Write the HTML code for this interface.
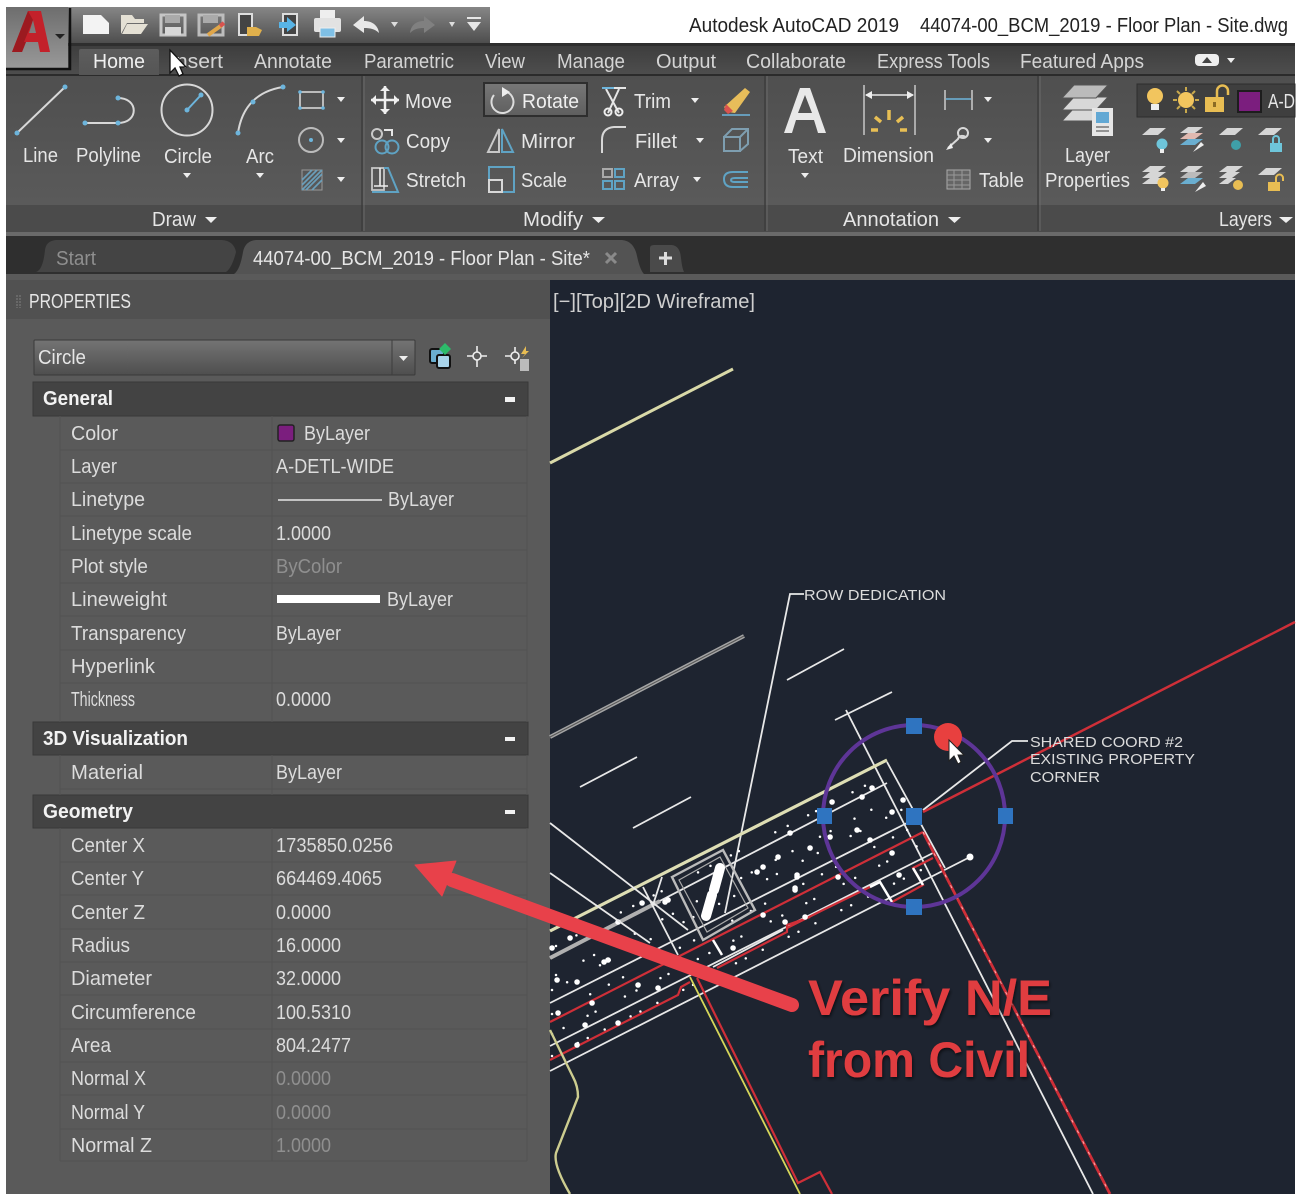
<!DOCTYPE html>
<html><head><meta charset="utf-8"><style>
html,body{margin:0;padding:0;background:#fff;width:1307px;height:1194px;overflow:hidden}
svg{display:block;font-family:"Liberation Sans",sans-serif;filter:blur(0.35px)}
.t{fill:#e6e6e6;font-size:20px}
.r{fill:#dcdcdc;font-size:20px}
.g{fill:#8f8f8f;font-size:20px}
.h{fill:#f2f2f2;font-size:20px;font-weight:bold}
.ar{fill:#eee}
.ico{fill:none;stroke:#d8d8d8;stroke-width:2}
.blu{fill:none;stroke:#5fa3c4;stroke-width:2}
.w{fill:none;stroke:#e8e8e8;stroke-width:1.8}
.rd{fill:none;stroke:#cf2f38;stroke-width:2.2}
</style></head><body>
<svg width="1307" height="1194" viewBox="0 0 1307 1194" xmlns="http://www.w3.org/2000/svg">
<defs>
<linearGradient id="qat" x1="0" y1="0" x2="0" y2="1"><stop offset="0" stop-color="#868686"/><stop offset="1" stop-color="#4c4c4c"/></linearGradient>
<linearGradient id="logo" x1="0" y1="0" x2="0" y2="1"><stop offset="0" stop-color="#6e6e6e"/><stop offset="1" stop-color="#9a9a9a"/></linearGradient>
<linearGradient id="tab" x1="0" y1="0" x2="0" y2="1"><stop offset="0" stop-color="#3e3e3e"/><stop offset="1" stop-color="#4e4e4e"/></linearGradient>
<linearGradient id="rib" x1="0" y1="0" x2="0" y2="1"><stop offset="0" stop-color="#4f4f4f"/><stop offset="1" stop-color="#5a5a5a"/></linearGradient>
<linearGradient id="cb" x1="0" y1="0" x2="0" y2="1"><stop offset="0" stop-color="#747474"/><stop offset="1" stop-color="#4e4e4e"/></linearGradient>
<linearGradient id="act" x1="0" y1="0" x2="0" y2="1"><stop offset="0" stop-color="#5d5d5d"/><stop offset="1" stop-color="#555"/></linearGradient>
<linearGradient id="btn" x1="0" y1="0" x2="0" y2="1"><stop offset="0" stop-color="#777"/><stop offset="1" stop-color="#5e5e5e"/></linearGradient>
<filter id="sh" x="-5%" y="-5%" width="110%" height="115%"><feDropShadow dx="1" dy="2" stdDeviation="1.500" flood-color="#000" flood-opacity="0.6"/></filter>
</defs>

<!-- QAT + app frame -->
<rect x="58" y="7" width="432" height="37" fill="url(#qat)"/>
<rect x="6" y="44" width="1289" height="1150" fill="#4a4a4a"/>
<rect x="58" y="43" width="1237" height="3" fill="#2e2e2e"/>
<rect x="6" y="46" width="1289" height="29" fill="url(#tab)"/>
<rect x="6" y="7" width="62" height="63" fill="url(#logo)"/>
<path d="M6 69H70V8" fill="none" stroke="#111" stroke-width="2.5"/>
<rect x="6" y="75" width="1289" height="130" fill="url(#rib)"/>
<rect x="6" y="205" width="1289" height="27" fill="#4b4b4b"/>
<rect x="6" y="232" width="1289" height="4" fill="#6a6a6a"/>
<rect x="6" y="236" width="1289" height="38" fill="#2f2f2f"/>
<rect x="6" y="74" width="1289" height="2" fill="#2b2b2b"/>

<!-- logo -->
<path d="M12 52L28 11H41L50 52H40L38 42H26L22 52ZM29 33H36L33 20Z" fill="#c3212a"/>
<path d="M28 11L33 20L24 42H26L22 52H12Z" fill="#9c1a20"/>
<path d="M55 34H65L60 39Z" fill="#222"/>

<!-- QAT icons -->
<path d="M83 15H101L109 23V34H83Z" fill="#f3f3f3"/>
<path d="M121 34V15H132L135 19H144V23H127L121 34ZM127 24H148L141 34H122Z" fill="#e4e0d4"/>
<path d="M161 15H185V35H161Z" fill="none" stroke="#c6c6c6" stroke-width="3"/><rect x="165" y="15" width="15" height="8" fill="#aaa"/><rect x="165" y="27" width="16" height="8" fill="#d8d8d8"/>
<path d="M199 15H223V35H199Z" fill="none" stroke="#bdbdbd" stroke-width="3"/><rect x="203" y="15" width="15" height="8" fill="#aaa"/><path d="M208 35L222 25" stroke="#e0a64a" stroke-width="4"/><path d="M220 26L224 23" stroke="#d9534f" stroke-width="4"/>
<rect x="239" y="14" width="13" height="21" fill="#444" stroke="#ddd" stroke-width="2"/><path d="M247 27H256L262 30L259 36H247Z" fill="#e0b04c"/>
<rect x="283" y="14" width="14" height="21" fill="#444" stroke="#ddd" stroke-width="2"/><path d="M279 22H287V17L296 25L287 32V28H279Z" fill="#58b4e6"/>
<path d="M320 10H335V18H320Z" fill="#eee"/><rect x="314" y="18" width="27" height="14" rx="2" fill="#e2e2e2"/><rect x="320" y="28" width="15" height="9" fill="#7fc0e6" stroke="#eee"/>
<path d="M353 25L364 16V21C373 21 378 26 379 33C375 29 370 28 364 28V33Z" fill="#e8e8e8"/>
<path d="M391 22H398L394.500 27Z" fill="#ddd"/>
<path d="M435 25L424 16V21C415 21 411 26 410 33C414 29 418 28 424 28V33Z" fill="#808080"/>
<path d="M449 22H455L452 27Z" fill="#ddd"/>
<path d="M467 17H481V19H467ZM467 22H481L474 31Z" fill="#e6e6e6"/>

<!-- title -->
<text x="689" y="32" font-size="20" fill="#222" textLength="210" lengthAdjust="spacingAndGlyphs">Autodesk AutoCAD 2019</text>
<text x="920" y="32" font-size="20" fill="#222" textLength="368" lengthAdjust="spacingAndGlyphs">44074-00_BCM_2019 - Floor Plan - Site.dwg</text>

<!-- ribbon tabs -->
<path d="M79 75V51Q79 49 81 49H157Q159 49 159 51V75Z" fill="url(#act)"/>
<g class="t">
<text x="93" y="68" fill="#f0f0f0" textLength="52" lengthAdjust="spacingAndGlyphs">Home</text>
<text x="170" y="68" textLength="53" lengthAdjust="spacingAndGlyphs" fill="#d4d4d4">Insert</text>
<text x="254" y="68" textLength="78" lengthAdjust="spacingAndGlyphs" fill="#d4d4d4">Annotate</text>
<text x="364" y="68" textLength="90" lengthAdjust="spacingAndGlyphs" fill="#d4d4d4">Parametric</text>
<text x="485" y="68" textLength="40" lengthAdjust="spacingAndGlyphs" fill="#d4d4d4">View</text>
<text x="557" y="68" textLength="68" lengthAdjust="spacingAndGlyphs" fill="#d4d4d4">Manage</text>
<text x="656" y="68" textLength="60" lengthAdjust="spacingAndGlyphs" fill="#d4d4d4">Output</text>
<text x="746" y="68" textLength="100" lengthAdjust="spacingAndGlyphs" fill="#d4d4d4">Collaborate</text>
<text x="877" y="68" textLength="113" lengthAdjust="spacingAndGlyphs" fill="#d4d4d4">Express Tools</text>
<text x="1020" y="68" textLength="124" lengthAdjust="spacingAndGlyphs" fill="#d4d4d4">Featured Apps</text>
</g>
<rect x="1195" y="54" width="24" height="12" rx="4" fill="#eee"/><path d="M1202 63L1207 57L1212 63Z" fill="#444"/><path d="M1227 58H1235L1231 63Z" fill="#eee"/>
<!-- cursor top -->
<path d="M170 50V73L175 68L179 76L183 74L180 67H186Z" fill="#fff" stroke="#111" stroke-width="1.300"/>

<!-- panel separators -->
<g stroke="#3d3d3d" stroke-width="1.500"><path d="M362 76V231M765 76V231M1038 76V231"/></g>
<g stroke="#6a6a6a" stroke-width="1"><path d="M364 76V231M767 76V231M1040 76V231"/></g>

<!-- Draw icons -->
<path d="M17 133L65 87" class="ico"/><circle cx="17" cy="133" r="2.500" fill="#6db5dc"/><circle cx="65" cy="87" r="2.500" fill="#6db5dc"/>
<path d="M85 123H118C139 123 139 98 118 98" class="ico"/><circle cx="85" cy="123" r="2.500" fill="#6db5dc"/><circle cx="118" cy="123" r="2.500" fill="#6db5dc"/><circle cx="118" cy="98" r="2.500" fill="#6db5dc"/>
<circle cx="187" cy="110" r="25.500" class="ico"/><path d="M187 110L201 95" stroke="#6db5dc" stroke-width="2"/><circle cx="187" cy="110" r="2.500" fill="#6db5dc"/><circle cx="201" cy="95" r="2.500" fill="#6db5dc"/>
<path d="M238 133C242 106 258 91 283 87" class="ico"/><circle cx="238" cy="133" r="2.500" fill="#6db5dc"/><circle cx="253" cy="102" r="2.500" fill="#6db5dc"/><circle cx="283" cy="87" r="2.500" fill="#6db5dc"/>
<rect x="300" y="92" width="23" height="16" fill="none" stroke="#bbb" stroke-width="2"/><g fill="#6db5dc"><circle cx="300" cy="92" r="1.800"/><circle cx="323" cy="92" r="1.800"/><circle cx="300" cy="108" r="1.800"/><circle cx="323" cy="108" r="1.800"/></g>
<circle cx="311" cy="140" r="12" fill="none" stroke="#bbb" stroke-width="2"/><circle cx="311" cy="140" r="2" fill="#6db5dc"/>
<rect x="302" y="170" width="20" height="20" fill="none" stroke="#999"/><path d="M302 180L312 170M302 190L322 170M312 190L322 180M306 190L322 174M302 185L317 170" stroke="#6a9fbb" stroke-width="1.600"/>
<g class="ar"><path d="M337 97H345L341 102Z"/><path d="M337 138H345L341 143Z"/><path d="M337 177H345L341 182Z"/><path d="M183 173H191L187 178Z"/><path d="M256 173H264L260 178Z"/><path d="M205 217H217L211 223Z"/></g>
<g class="t">
<text x="23" y="162" textLength="35" lengthAdjust="spacingAndGlyphs">Line</text>
<text x="76" y="162" textLength="65" lengthAdjust="spacingAndGlyphs">Polyline</text>
<text x="164" y="163" textLength="48" lengthAdjust="spacingAndGlyphs">Circle</text>
<text x="246" y="163" textLength="28" lengthAdjust="spacingAndGlyphs">Arc</text>
<text x="152" y="226" textLength="44" lengthAdjust="spacingAndGlyphs">Draw</text>
<text x="523" y="226" textLength="60" lengthAdjust="spacingAndGlyphs">Modify</text>
<text x="843" y="226" textLength="96" lengthAdjust="spacingAndGlyphs">Annotation</text>
<text x="1219" y="226" textLength="53" lengthAdjust="spacingAndGlyphs">Layers</text>
</g>
<g class="ar"><path d="M592 217H605L598.500 223Z"/><path d="M948 217H961L954.500 223Z"/><path d="M1279 217H1293L1286 223Z"/></g>

<!-- Modify -->
<rect x="484" y="83" width="103" height="33" fill="url(#btn)" stroke="#2e2e2e" stroke-width="2"/>
<path d="M371 100H399M385 86V114" stroke="#f0f0f0" stroke-width="2.500"/><path d="M371 100L376 95V105ZM399 100L394 95V105ZM385 86L380 91H390ZM385 114L380 109H390Z" fill="#f0f0f0"/>
<path d="M507 92A11 11 0 1 1 494 95" fill="none" stroke="#ddd" stroke-width="2"/><path d="M502 87L510 92L502 97Z" fill="#eee"/>
<path d="M602 88H626M606 89L619 113M619 89L608 113" stroke="#e6e6e6" stroke-width="2"/><path d="M602 88H614" stroke="#6db5dc" stroke-width="2"/><circle cx="608" cy="112" r="3.500" fill="none" stroke="#eee" stroke-width="2"/><circle cx="619" cy="112" r="3.500" fill="none" stroke="#eee" stroke-width="2"/>
<g class="t">
<text x="405" y="108" textLength="47" lengthAdjust="spacingAndGlyphs">Move</text>
<text x="522" y="108" textLength="57" lengthAdjust="spacingAndGlyphs" fill="#f0f0f0">Rotate</text>
<text x="634" y="108" textLength="37" lengthAdjust="spacingAndGlyphs">Trim</text>
<text x="406" y="148" textLength="44" lengthAdjust="spacingAndGlyphs">Copy</text>
<text x="521" y="148" textLength="54" lengthAdjust="spacingAndGlyphs">Mirror</text>
<text x="635" y="148" textLength="42" lengthAdjust="spacingAndGlyphs">Fillet</text>
<text x="406" y="187" textLength="60" lengthAdjust="spacingAndGlyphs">Stretch</text>
<text x="521" y="187" textLength="46" lengthAdjust="spacingAndGlyphs">Scale</text>
<text x="634" y="187" textLength="45" lengthAdjust="spacingAndGlyphs">Array</text>
</g>
<g class="ar"><path d="M691 98H699L695 103Z"/><path d="M696 138H704L700 143Z"/><path d="M693 177H701L697 182Z"/></g>
<circle cx="377" cy="134" r="5" fill="none" stroke="#c8c8c8" stroke-width="2"/><path d="M384 130H392V136" fill="none" stroke="#e6e6e6" stroke-width="2"/><circle cx="382" cy="147" r="6.500" class="blu"/><circle cx="392" cy="147" r="6.500" class="blu"/>
<path d="M499 129L488 152H499Z" fill="none" stroke="#c8c8c8" stroke-width="2"/><path d="M502 129L513 152H502Z" fill="none" stroke="#5fa3c4" stroke-width="2"/>
<path d="M372 168H384V190H372Z" fill="none" stroke="#c8c8c8" stroke-width="1.800"/><path d="M384 168H388L398 192H372" class="blu"/><path d="M380 168V186M374 186H388" stroke="#eee" stroke-width="1.600"/>
<rect x="489" y="167" width="25" height="25" class="blu"/><rect x="489" y="180" width="13" height="12" fill="none" stroke="#d8d8d8" stroke-width="2"/>
<path d="M602 153V140Q602 128 614 127H626" class="ico"/>
<g class="blu"><rect x="603" y="169" width="9" height="8" stroke="#aaa"/><rect x="615" y="169" width="9" height="8"/><rect x="603" y="181" width="9" height="8"/><rect x="615" y="181" width="9" height="8"/></g>
<path d="M724 107L745 88L750 92L735 113L728 112Z" fill="#e7bd5a"/><path d="M726 104L733 111L728 114L724 110Z" fill="#d9534f"/><path d="M722 115H750" stroke="#6db5dc" stroke-width="1.500"/>
<path d="M724 137H740V151H724ZM724 137L732 129H748V144L740 151M740 137L748 129" fill="none" stroke="#7e9eb0" stroke-width="2"/>
<path d="M748 172H733Q724 172 724 179Q724 187 733 187H748M748 178H735Q731 178 731 180Q731 182 735 182H748" class="blu"/>

<!-- Annotation -->
<path d="M784 133L800 88H810L826 133H818L814 120H796L792 133ZM798 113H812L805 95Z" fill="#e8e8e8"/>
<path d="M864 85V135M915 85V135" stroke="#c8c8c8" stroke-width="1.500"/><path d="M866 95H913" stroke="#e8e8e8" stroke-width="1.500"/><path d="M865 95L872 91V99ZM914 95L907 91V99Z" fill="#eee"/>
<path d="M889 110V120M875 117L881 122M903 117L897 122M871 130H878M907 130H900" stroke="#e8bf54" stroke-width="3.500"/>
<path d="M945 90V110M972 90V110" stroke="#ccc" stroke-width="1.500"/><path d="M946 99H971" stroke="#6db5dc" stroke-width="1.500"/>
<path d="M948 148L958 139Q960 134 966 137" class="ico"/><circle cx="963" cy="133" r="5" class="ico"/><path d="M946 150L951 143L953 148Z" fill="#eee"/>
<rect x="947" y="170" width="23" height="19" fill="#666" stroke="#aaa"/><path d="M947 175H970M947 180H970M947 185H970M954 170V189M962 170V189" stroke="#999"/>
<g class="ar"><path d="M984 97H992L988 102Z"/><path d="M984 138H992L988 143Z"/><path d="M801 173H809L805 178Z"/></g>
<g class="t">
<text x="788" y="163" textLength="35" lengthAdjust="spacingAndGlyphs">Text</text>
<text x="843" y="162" textLength="91" lengthAdjust="spacingAndGlyphs">Dimension</text>
<text x="979" y="187" textLength="45" lengthAdjust="spacingAndGlyphs">Table</text>
<text x="1065" y="162" textLength="45" lengthAdjust="spacingAndGlyphs">Layer</text>
<text x="1045" y="187" textLength="85" lengthAdjust="spacingAndGlyphs">Properties</text>
</g>

<!-- Layers -->
<g fill="#d8d8d8" stroke="#555" stroke-width="1">
<path d="M1062 121L1074 108H1108L1096 121Z"/><path d="M1062 110L1074 97H1108L1096 110Z"/><path d="M1062 98L1074 85H1108L1096 98Z" fill="#bbb"/>
</g>
<rect x="1092" y="108" width="21" height="28" fill="#e6e6e6"/><rect x="1096" y="112" width="13" height="11" fill="#62a8d4"/><path d="M1096 127H1109M1096 131H1109" stroke="#777" stroke-width="1.500"/>
<rect x="1137" y="84" width="158" height="33" fill="#3f3f3f" stroke="#2e2e2e"/>
<circle cx="1155" cy="96" r="8" fill="#f2c55e"/><path d="M1151 104H1159V110H1151Z" fill="#eee"/>
<circle cx="1186" cy="100" r="8" fill="#f2c55e"/><path d="M1186 87V91M1186 109V113M1173 100H1177M1195 100H1199M1177 91L1180 94M1195 91L1192 94M1177 109L1180 106M1195 109L1192 106" stroke="#c9a94c" stroke-width="2"/>
<rect x="1205" y="97" width="19" height="15" fill="#e8bd53"/><path d="M1217 97V91A5.500 5.500 0 0 1 1228 91V95" fill="none" stroke="#e8bd53" stroke-width="2.500"/><rect x="1213" y="102" width="3" height="5" fill="#8a6b24"/>
<rect x="1238" y="91" width="23" height="21" fill="#7b1e7e" stroke="#1d1d1d" stroke-width="2"/>
<text x="1268" y="108" class="t" textLength="27" lengthAdjust="spacingAndGlyphs">A-D</text>
<g fill="#d6d6d6">
<path d="M1142 135L1150 128H1166L1158 135Z"/><circle cx="1162" cy="144" r="5.500" fill="#6ec5da"/><rect x="1160" y="149" width="4" height="4" fill="#eee"/>
<path d="M1180 133L1188 127H1203L1195 133Z"/><path d="M1180 139L1188 133H1203L1195 139Z" fill="#e0b9b0"/><path d="M1180 145L1188 139H1203L1195 145Z" fill="#6aaed0"/><path d="M1193 152L1201 142L1204 145Z" fill="#eee"/>
<path d="M1219 135L1227 128H1243L1235 135Z"/><circle cx="1236" cy="145" r="5" fill="#3f9fa8"/>
<path d="M1258 135L1266 128H1282L1274 135Z"/><rect x="1270" y="143" width="12" height="9" fill="#6ec5da"/><path d="M1273 143V139A3 3 0 0 1 1279 139V143" fill="none" stroke="#6ec5da" stroke-width="2"/>
<path d="M1142 172L1150 166H1166L1158 172Z"/><path d="M1142 178L1150 172H1166L1158 178Z"/><path d="M1142 184L1150 178H1166L1158 184Z"/><circle cx="1163" cy="183" r="5.500" fill="#f2c55e"/><rect x="1161" y="188" width="4" height="3" fill="#eee"/>
<path d="M1180 172L1188 166H1203L1195 172Z"/><path d="M1180 178L1188 172H1203L1195 178Z" fill="#bbb"/><path d="M1180 184L1188 178H1203L1195 184Z" fill="#6aaed0"/><path d="M1195 192L1203 182L1206 186Z" fill="#eee"/>
<path d="M1219 172L1227 166H1243L1235 172Z"/><path d="M1219 178L1227 172H1240L1232 178Z"/><path d="M1219 184L1227 178H1236L1228 184Z"/><circle cx="1238" cy="185" r="5" fill="#e8bd53"/>
<path d="M1258 175L1266 168H1282L1274 175Z"/><rect x="1268" y="182" width="12" height="9" fill="#e8bd53"/><path d="M1276 182V178A3 3 0 0 1 1283 178V181" fill="none" stroke="#e8bd53" stroke-width="2"/>
</g>

<!-- file tabs -->
<path d="M36 272Q43 270 45 250Q46 241 56 240H222Q234 241 236 252Q232 268 226 272Z" fill="#444"/>
<path d="M234 274Q240 270 243 252Q245 241 256 240H622Q634 241 637 256Q640 270 644 274Z" fill="#535353"/>
<path d="M650 248Q650 245 654 245H672Q680 246 681 258Q682 268 684 272H650Z" fill="#4a4a4a"/>
<path d="M659 258H672M665.500 252V265" stroke="#ddd" stroke-width="3"/>
<text x="56" y="265" class="g" textLength="40" lengthAdjust="spacingAndGlyphs">Start</text>
<text x="253" y="265" class="t" textLength="337" lengthAdjust="spacingAndGlyphs">44074-00_BCM_2019 - Floor Plan - Site*</text>
<path d="M606 253L616 263M616 253L606 263" stroke="#8a8a8a" stroke-width="3"/>
<rect x="6" y="274" width="1289" height="6" fill="#5a5a5a"/>

<!-- properties -->
<rect x="6" y="280" width="544" height="914" fill="#5a5a5a"/>
<rect x="6" y="280" width="544" height="39" fill="#515151"/>
<path d="M17 295V308M20 295V308" stroke="#707070" stroke-width="1.500" stroke-dasharray="2 1"/>
<text x="29" y="308" class="t" textLength="102" lengthAdjust="spacingAndGlyphs">PROPERTIES</text>
<rect x="34" y="340" width="381" height="35" rx="1" fill="url(#cb)" stroke="#3a3a3a"/>
<path d="M392 340V375" stroke="#3d3d3d"/>
<path d="M399 356H408L403.500 361Z" fill="#eee"/>
<text x="38" y="364" class="t" textLength="48" lengthAdjust="spacingAndGlyphs">Circle</text>
<rect x="430" y="349" width="14" height="14" rx="2" fill="#6aaed0" stroke="#111" stroke-width="2"/><rect x="437" y="355" width="13" height="13" rx="2" fill="#a9d4ea" stroke="#111" stroke-width="2"/><path d="M445 343L451 349L445 355L439 349Z" fill="#2dbb6a"/>
<circle cx="477" cy="356" r="4" fill="none" stroke="#eee" stroke-width="1.600"/><path d="M477 346V352M477 360V367M467 356H473M481 356H487" stroke="#eee" stroke-width="1.600"/>
<circle cx="515" cy="356" r="4" fill="none" stroke="#eee" stroke-width="1.600"/><path d="M515 347V352M505 356H511M515 360V364" stroke="#eee" stroke-width="1.600"/><path d="M526 346L521 354H525L522 358L529 351H526Z" fill="#e8bd53"/><rect x="520" y="359" width="9" height="12" fill="#bbb"/>

<g fill="#434343" stroke="#383838"><rect x="33" y="382" width="495" height="34"/><rect x="33" y="722" width="495" height="33"/><rect x="33" y="795" width="495" height="33"/></g>
<g fill="#f2f2f2"><rect x="505" y="397" width="10" height="5"/><rect x="505" y="737" width="10" height="4"/><rect x="505" y="810" width="10" height="4"/></g>
<text x="43" y="405" class="h" textLength="70" lengthAdjust="spacingAndGlyphs">General</text>
<text x="43" y="745" class="h" textLength="145" lengthAdjust="spacingAndGlyphs">3D Visualization</text>
<text x="43" y="818" class="h" textLength="90" lengthAdjust="spacingAndGlyphs">Geometry</text>

<path d="M272 416V722M272 755V795M272 828V1161" stroke="#525252" stroke-width="1"/>
<path d="M60 416V722M60 755V795M60 828V1161M527 416V722M527 755V795M527 828V1161" stroke="#525252" stroke-width="1"/>
<g stroke="#525252" stroke-width="1"><path d="M60 450H527M60 483H527M60 516H527M60 550H527M60 583H527M60 616H527M60 650H527M60 683H527M60 789H527M60 862H527M60 895H527M60 929H527M60 962H527M60 995H527M60 1029H527M60 1062H527M60 1095H527M60 1129H527M60 1161H527"/></g>

<g class="r">
<text x="71" y="440" textLength="47" lengthAdjust="spacingAndGlyphs">Color</text>
<text x="71" y="473" textLength="46" lengthAdjust="spacingAndGlyphs">Layer</text>
<text x="71" y="506" textLength="74" lengthAdjust="spacingAndGlyphs">Linetype</text>
<text x="71" y="540" textLength="121" lengthAdjust="spacingAndGlyphs">Linetype scale</text>
<text x="71" y="573" textLength="77" lengthAdjust="spacingAndGlyphs">Plot style</text>
<text x="71" y="606" textLength="96" lengthAdjust="spacingAndGlyphs">Lineweight</text>
<text x="71" y="640" textLength="115" lengthAdjust="spacingAndGlyphs">Transparency</text>
<text x="71" y="673" textLength="84" lengthAdjust="spacingAndGlyphs">Hyperlink</text>
<text x="71" y="706" textLength="64" lengthAdjust="spacingAndGlyphs">Thickness</text>
<text x="71" y="779" textLength="72" lengthAdjust="spacingAndGlyphs">Material</text>
<text x="71" y="852" textLength="74" lengthAdjust="spacingAndGlyphs">Center X</text>
<text x="71" y="885" textLength="73" lengthAdjust="spacingAndGlyphs">Center Y</text>
<text x="71" y="919" textLength="74" lengthAdjust="spacingAndGlyphs">Center Z</text>
<text x="71" y="952" textLength="59" lengthAdjust="spacingAndGlyphs">Radius</text>
<text x="71" y="985" textLength="81" lengthAdjust="spacingAndGlyphs">Diameter</text>
<text x="71" y="1019" textLength="125" lengthAdjust="spacingAndGlyphs">Circumference</text>
<text x="71" y="1052" textLength="40" lengthAdjust="spacingAndGlyphs">Area</text>
<text x="71" y="1085" textLength="75" lengthAdjust="spacingAndGlyphs">Normal X</text>
<text x="71" y="1119" textLength="74" lengthAdjust="spacingAndGlyphs">Normal Y</text>
<text x="71" y="1152" textLength="81" lengthAdjust="spacingAndGlyphs">Normal Z</text>

<text x="304" y="440" textLength="66" lengthAdjust="spacingAndGlyphs">ByLayer</text>
<text x="276" y="473" textLength="118" lengthAdjust="spacingAndGlyphs">A-DETL-WIDE</text>
<text x="388" y="506" textLength="66" lengthAdjust="spacingAndGlyphs">ByLayer</text>
<text x="276" y="540" textLength="55" lengthAdjust="spacingAndGlyphs">1.0000</text>
<text x="387" y="606" textLength="66" lengthAdjust="spacingAndGlyphs">ByLayer</text>
<text x="276" y="640" textLength="65" lengthAdjust="spacingAndGlyphs">ByLayer</text>
<text x="276" y="706" textLength="55" lengthAdjust="spacingAndGlyphs">0.0000</text>
<text x="276" y="779" textLength="66" lengthAdjust="spacingAndGlyphs">ByLayer</text>
<text x="276" y="852" textLength="117" lengthAdjust="spacingAndGlyphs">1735850.0256</text>
<text x="276" y="885" textLength="106" lengthAdjust="spacingAndGlyphs">664469.4065</text>
<text x="276" y="919" textLength="55" lengthAdjust="spacingAndGlyphs">0.0000</text>
<text x="276" y="952" textLength="65" lengthAdjust="spacingAndGlyphs">16.0000</text>
<text x="276" y="985" textLength="65" lengthAdjust="spacingAndGlyphs">32.0000</text>
<text x="276" y="1019" textLength="75" lengthAdjust="spacingAndGlyphs">100.5310</text>
<text x="276" y="1052" textLength="75" lengthAdjust="spacingAndGlyphs">804.2477</text>
</g>
<g class="g">
<text x="276" y="573" textLength="66" lengthAdjust="spacingAndGlyphs">ByColor</text>
<text x="276" y="1085" textLength="55" lengthAdjust="spacingAndGlyphs">0.0000</text>
<text x="276" y="1119" textLength="55" lengthAdjust="spacingAndGlyphs">0.0000</text>
<text x="276" y="1152" textLength="55" lengthAdjust="spacingAndGlyphs">1.0000</text>
</g>
<rect x="278" y="425" width="16" height="16" rx="2" fill="#7b1e7e" stroke="#222" stroke-width="1.500"/>
<path d="M278 500H382" stroke="#e6e6e6" stroke-width="1.500"/>
<rect x="277" y="595" width="103" height="8" fill="#fff"/>

<!-- viewport -->
<rect x="550" y="280" width="745" height="914" fill="#1e2430"/>
<text x="553" y="308" fill="#cfcfcf" font-size="20" textLength="202" lengthAdjust="spacingAndGlyphs">[−][Top][2D Wireframe]</text>

<!-- drawing: upper loose lines -->
<path d="M550 463L733 369" fill="none" stroke="#d9d9a8" stroke-width="3"/>
<path d="M550 737L744 636" fill="none" stroke="#a4a4a4" stroke-width="4"/>
<path d="M550 737L744 636" fill="none" stroke="#555" stroke-width="1"/>
<path d="M787 680L844 649M835 720L892 692M580 787L637 757M633 828L691 797" class="w"/>
<path d="M804 594H790L725 913" class="w"/>
<path d="M846 710L1093 1194" class="w"/>
<path d="M887 762L945 868" class="w"/>
<path d="M923 810L1012 741H1028" class="w"/>
<path d="M923 812L1295 622" fill="none" stroke="#cf2f38" stroke-width="2.400"/>
<!-- band -->
<path d="M550 931L887 760" fill="none" stroke="#dedeb4" stroke-width="3.200"/>
<path d="M550 958L887 783" class="w"/>
<path d="M550 958L660 901" fill="none" stroke="#b0b0b0" stroke-width="4"/>
<path d="M550 1003L907 823" class="w"/>
<path d="M550 1022L923 832" class="rd"/>
<path d="M550 1046L933 853" class="w"/>
<path d="M550 1071L970 857" class="w"/>
<path d="M550 1060L678 995L681 987L690 982M717 968L787 932L787 925L810 917M787 928L823 910L870 887M892 902L923 885L913 868L933 858" class="rd"/>
<path d="M713 967L783 930" class="w"/>
<path d="M870 887L880 882L892 902" fill="none" stroke="#fff" stroke-width="2.500"/>
<path d="M913 868L923 885" fill="none" stroke="#fff" stroke-width="2.500"/>
<!-- scattered hatch dots -->
<g fill="none" stroke="#fff" stroke-linecap="round">
<path d="M556 946L880 778" stroke-width="2.500" stroke-dasharray="0 23 0 9 0 41 0 14"/>
<path d="M556 975L890 800" stroke-width="2.500" stroke-dasharray="0 31 0 12 0 27 0 19"/>
<path d="M552 990L905 808" stroke-width="2.500" stroke-dasharray="0 17 0 37 0 11 0 29"/>
<path d="M552 1014L915 826" stroke-width="2.500" stroke-dasharray="0 43 0 21 0 16"/>
<path d="M552 1034L925 842" stroke-width="2.500" stroke-dasharray="0 13 0 27 0 9 0 33"/>
<path d="M552 1056L925 868" stroke-width="2.500" stroke-dasharray="0 29 0 11 0 19"/>
<path d="M570 938h.1M552 948h.1M608 960h.1M604 962h.1M557 980h.1M577 982h.1M638 985h.1M592 1003h.1M558 1013h.1M585 1025h.1M618 1023h.1M577 1045h.1M658 988h.1M642 903h.1M665 902h.1M668 900h.1M757 872h.1M763 867h.1M778 857h.1M797 875h.1M795 888h.1M763 915h.1M733 948h.1M785 922h.1M805 917h.1M618 922h.1M832 802h.1M862 797h.1M872 788h.1M892 812h.1M903 800h.1M857 830h.1M830 837h.1M810 848h.1M790 833h.1M892 853h.1M870 840h.1M797 877h.1M899 875h.1M795 890h.1M838 877h.1" stroke-width="5.500"/>
</g>
<!-- unit block -->
<path d="M672 877L723 850L755 910L703 940Z" fill="none" stroke="#bbb" stroke-width="2.400"/>
<path d="M679 880L720 857L748 908L707 932Z" fill="none" stroke="#aaa" stroke-width="1.200"/>
<path d="M720 868L714 890M712 895L706 916" stroke="#fff" stroke-width="10" stroke-linecap="round"/>
<path d="M713 940L722 955" stroke="#fff" stroke-width="2.500"/>
<path d="M550 823L688 930M550 873L650 943M643 887L678 955M662 877L653 905" class="w"/>
<!-- lower lines -->
<path d="M690 977L800 1194" fill="none" stroke="#d6d65a" stroke-width="1.800"/>
<path d="M697 978L798 1183L820 1172L832 1194" class="rd"/>
<path d="M923 832L1110 1194" fill="none" stroke="#cf2f38" stroke-width="2.800"/>
<path d="M923 832L1110 1194" fill="none" stroke="#ffb0b0" stroke-width="1" stroke-dasharray="3 9"/>
<path d="M550 1030L573 1077Q578 1086 578 1097L556 1153Q553 1165 570 1194" fill="none" stroke="#cdcd90" stroke-width="2.400"/>

<!-- selection circle -->
<circle cx="914" cy="816" r="91" fill="none" stroke="#5e3597" stroke-width="4"/>
<g fill="#2f74c0"><rect x="906" y="718" width="16" height="16"/><rect x="817" y="808" width="15" height="16"/><rect x="906" y="808" width="16" height="17"/><rect x="998" y="808" width="15" height="16"/><rect x="906" y="899" width="16" height="16"/></g>
<circle cx="970" cy="857" r="3.500" fill="#fff"/>
<circle cx="948" cy="737" r="14" fill="#e8403f"/>
<path d="M949 740V761L954 756L958 764L961 762L958 755H964Z" fill="#fff" stroke="#222" stroke-width="1"/>

<!-- drawing labels -->
<g fill="#dcdcdc" font-size="15">
<text x="804" y="600" textLength="142" lengthAdjust="spacingAndGlyphs">ROW DEDICATION</text>
<text x="1030" y="747" textLength="153" lengthAdjust="spacingAndGlyphs">SHARED COORD #2</text>
<text x="1030" y="764" textLength="165" lengthAdjust="spacingAndGlyphs">EXISTING PROPERTY</text>
<text x="1030" y="782" textLength="70" lengthAdjust="spacingAndGlyphs">CORNER</text>
</g>

<!-- callout arrow -->
<path d="M792 1005L452 880" stroke="#e8414a" stroke-width="14" stroke-linecap="round"/>
<path d="M415 865L456 861L442 896Z" fill="#e8414a" stroke="#e8414a" stroke-width="1" stroke-linejoin="round"/>
<g fill="#e03c40" font-size="50" font-weight="bold" filter="url(#sh)">
<text x="808" y="1015" textLength="244" lengthAdjust="spacingAndGlyphs">Verify N/E</text>
<text x="808" y="1077" textLength="222" lengthAdjust="spacingAndGlyphs">from Civil</text>
</g>
</svg>
</body></html>
